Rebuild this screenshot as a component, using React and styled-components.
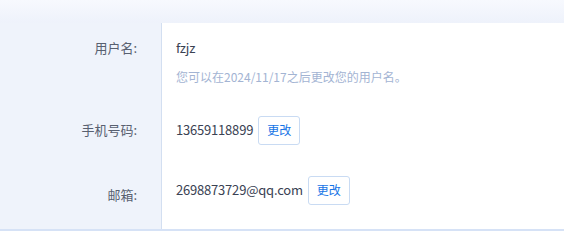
import React from "react";
import styled, { createGlobalStyle } from "styled-components";

const Global = createGlobalStyle`
  html, body { margin: 0; padding: 0; background: #ffffff; }
  body { font-family: "Noto Sans CJK SC", "Noto Sans", sans-serif; }
`;

const Page = styled.div`
  width: 564px;
  height: 231px;
  overflow: hidden;
  display: flex;
  flex-direction: column;
`;

const TopBand = styled.div`
  height: 23px;
  flex: none;
  background: linear-gradient(180deg, #f7f9fe 0%, #eef2fb 100%);
`;

const Table = styled.div`
  display: flex;
  flex-direction: column;
  border-bottom: 2px solid #d6e2f6;
`;

const Row = styled.div`
  display: grid;
  grid-template-columns: 162px 1fr;
  height: ${(p) => p.$h}px;
`;

const Label = styled.div`
  background: #eff3fb;
  border-right: 1px solid #d3dff1;
  box-sizing: border-box;
  display: flex;
  justify-content: flex-end;
  align-items: ${(p) => (p.$top ? "flex-start" : "center")};
  padding: ${(p) => (p.$top ? "15px 24px 0 0" : "0 24px 0 0")};
  font-size: 13px;
  line-height: 20px;
  color: #586070;
`;

const Value = styled.div`
  box-sizing: border-box;
  padding: ${(p) => (p.$top ? "15px 14px 0 14px" : `0 14px ${p.$pb || 0}px 14px`)};
  display: flex;
  flex-direction: ${(p) => (p.$top ? "column" : "row")};
  align-items: ${(p) => (p.$top ? "flex-start" : "center")};
  gap: 5px;
`;

const Text = styled.span`
  font-size: 13px;
  line-height: 20px;
  letter-spacing: -0.2px;
  color: #3a4253;
`;

const Hint = styled.div`
  font-size: 12px;
  line-height: 18px;
  margin-top: 5px;
  color: #a3b4d3;
`;

const Button = styled.button`
  height: 29px;
  box-sizing: border-box;
  padding: 0 8px;
  border: 1px solid #c9dbf3;
  border-radius: 3px;
  background: #ffffff;
  color: #1775e6;
  font-family: inherit;
  font-size: 12px;
  line-height: 18px;
  cursor: pointer;
`;

export default function App() {
  return (
    <Page>
      <Global />
      <TopBand />
      <Table>
        <Row $h={77}>
          <Label $top>用户名:</Label>
          <Value $top>
            <Text>fzjz</Text>
            <Hint>您可以在2024/11/17之后更改您的用户名。</Hint>
          </Value>
        </Row>
        <Row $h={60}>
          <Label>手机号码:</Label>
          <Value>
            <Text>13659118899</Text>
            <Button>更改</Button>
          </Value>
        </Row>
        <Row $h={69}>
          <Label>邮箱:</Label>
          <Value $pb={9}>
            <Text>2698873729@qq.com</Text>
            <Button>更改</Button>
          </Value>
        </Row>
      </Table>
    </Page>
  );
}
